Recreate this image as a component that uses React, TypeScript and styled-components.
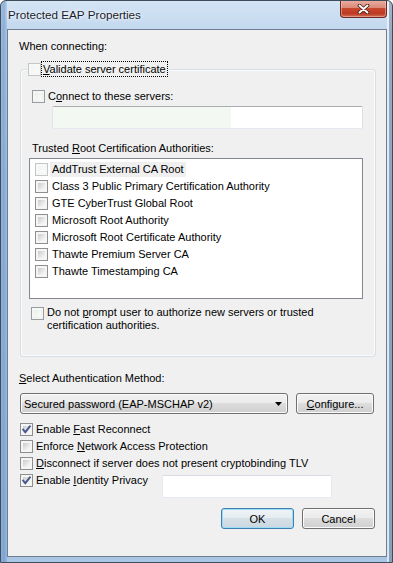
import React from 'react';
import styled, { createGlobalStyle } from 'styled-components';

const GlobalStyle = createGlobalStyle`
  html, body { margin: 0; padding: 0; background: #ffffff; }
  body { font-family: "Liberation Sans", Arial, sans-serif; font-size: 11px; color: #000; }
  * { box-sizing: border-box; }
  u { text-decoration: underline; text-underline-offset: 1px; }
`;

const Window = styled.div`
  width: 393px;
  height: 563px;
  display: flex;
  flex-direction: column;
  border: 1px solid #3e4c5c;
  border-radius: 6px 6px 0 0;
  padding: 0 5px 5px 6px;
  overflow: hidden;
  background:
    linear-gradient(to right, transparent 0, transparent calc(100% - 5px), rgba(255,255,255,0.55) calc(100% - 5px), rgba(255,255,255,0.55) calc(100% - 3px), rgba(70,90,110,0.35) calc(100% - 3px), rgba(70,90,110,0.35) 100%),
    linear-gradient(to right, rgba(80,130,190,0.35) 0, rgba(80,130,190,0.5) 3px, rgba(80,130,190,0.2) 6px, transparent 6px),
    linear-gradient(to bottom, #d4e4f5 0, #c3d8ee 28px, #b4cde8 200px, #a9c6e4 100%);
`;

const TitleBar = styled.div`
  height: 28px;
  flex: none;
  display: flex;
  align-items: flex-start;
  justify-content: space-between;
`;

const Title = styled.div`
  padding: 7px 0 0 1px;
  font-size: 11.7px;
  line-height: 14px;
  color: #18202b;
  text-shadow: 0 0 5px rgba(255, 255, 255, 0.95), 0 0 2px rgba(255, 255, 255, 0.9);
`;

const CloseButton = styled.div`
  width: 47px;
  height: 18px;
  margin-top: -1px;
  display: flex;
  align-items: center;
  justify-content: center;
  border: 1px solid #6b2a20;
  border-top: none;
  border-radius: 0 0 4px 4px;
  background: linear-gradient(to bottom, #eab1a4 0%, #dc8a78 45%, #c7472f 50%, #bd3a23 80%, #d0705a 100%);
  box-shadow: inset 0 0 0 1px rgba(255, 210, 200, 0.45);
`;

const Client = styled.div`
  flex: 1;
  display: flex;
  flex-direction: column;
  border: 1px solid #6e7d8f;
  background: #f0f0f0;
  padding: 10px 10px 0 11px;
`;

const Label = styled.div<{ $mt?: number }>`
  line-height: 13px;
  margin-top: ${p => p.$mt ?? 0}px;
  white-space: nowrap;
`;

const GroupBox = styled.div`
  position: relative;
  margin: 16px 0 0 1px;
  display: flex;
  flex-direction: column;
  border: 1px solid #d5dfe5;
  border-radius: 3px;
  box-shadow: inset 0 0 0 1px #fafbfc;
  padding: 20px 12px 24px 11px;
`;

const Legend = styled.div`
  position: absolute;
  top: -8px;
  left: 6px;
  display: flex;
  align-items: center;
  gap: 1px;
  padding: 0 2px 0 1px;
  background: #f0f0f0;
`;

const FocusText = styled.span`
  line-height: 14px;
  padding: 0 1px;
  outline: 1px dotted #000;
  outline-offset: 0;
  white-space: nowrap;
`;

type Tone = 'normal' | 'pale' | 'faded';

const Box = styled.span<{ $tone: Tone }>`
  position: relative;
  flex: none;
  width: 13px;
  height: 13px;
  border: 1px solid ${p => (p.$tone === 'faded' ? '#c2c6c9' : p.$tone === 'pale' ? '#9a9d9f' : '#8e8f8f')};
  background: ${p => (p.$tone === 'faded' ? '#f7f9f7' : '#f4f4f4')};
  &::after {
    content: '';
    position: absolute;
    inset: 1px;
    background: ${p =>
      p.$tone === 'faded'
        ? 'linear-gradient(135deg, #f1f4f1, #fbfcfb)'
        : p.$tone === 'pale'
        ? 'linear-gradient(135deg, #e9efe8, #fafcfa)'
        : 'linear-gradient(135deg, #c9cbce, #eeeeee 70%, #f8f8f8)'};
    border: 1px solid ${p => (p.$tone === 'normal' ? '#f6f6f6' : 'transparent')};
  }
  svg {
    position: absolute;
    left: 0;
    top: 0;
    z-index: 1;
  }
`;

const Check = ({ tone = 'normal', checked = false }: { tone?: Tone; checked?: boolean }) => (
  <Box $tone={tone}>
    {checked && (
      <svg width="11" height="11" viewBox="0 0 11 11">
        <path d="M2.2 5.6 L4.3 8.2 L8.9 2.3" fill="none" stroke="#46598a" strokeWidth="1.9" strokeLinecap="square" strokeLinejoin="miter" />
      </svg>
    )}
  </Box>
);

const CheckRow = styled.div<{ $ml?: number; $width?: number }>`
  display: flex;
  align-items: center;
  gap: 3px;
  height: ${p => (p.$width ? 17 : 13)}px;
  margin-left: ${p => p.$ml ?? 0}px;
  ${p => (p.$width ? `width: ${p.$width}px; flex: none;` : '')}
  line-height: 13px;
  white-space: nowrap;
`;

const OptionRow = styled.div`
  display: flex;
  align-items: center;
  gap: 3px;
  height: 17px;
  margin-left: 1px;
  line-height: 13px;
  white-space: nowrap;
`;

const TextBox = styled.div<{ $tint?: number }>`
  position: relative;
  height: 23px;
  background: #fff;
  border: 1px solid;
  border-color: #abadb3 #dbdfe6 #e3e9ef #e2e3ea;
  border-radius: 2px;
  &::before {
    content: '';
    position: absolute;
    left: 0;
    top: 0;
    bottom: 0;
    width: ${p => p.$tint ?? 0}px;
    background: #f3f9f2;
  }
`;

const ServerBox = styled(TextBox)`
  margin: 3px 0 0 20px;
`;

const PrivacyBox = styled(TextBox)`
  width: 170px;
  margin-top: 3px;
  border-color: #d6dbe2 #e3e9ef #e3e9ef #e3e9ef;
`;

const ListView = styled.div`
  height: 141px;
  margin: 3px 0 0 -3px;
  display: flex;
  flex-direction: column;
  border: 1px solid #828790;
  background: #fff;
  padding: 2px 0 0 5px;
`;

const ListItem = styled.div`
  display: flex;
  align-items: center;
  gap: 2px;
  height: 17px;
  white-space: nowrap;
`;

const ItemText = styled.span<{ $hot?: boolean }>`
  line-height: 15px;
  padding: 0 2px;
  background: ${p => (p.$hot ? '#efefef' : 'transparent')};
`;

const PromptRow = styled.div`
  display: flex;
  align-items: flex-start;
  gap: 3px;
  margin: 7px 0 0 -1px;
  & > span:first-child { margin-top: 1px; }
`;

const PromptText = styled.div`
  line-height: 13px;
`;

const MethodRow = styled.div`
  display: flex;
  align-items: center;
  gap: 8px;
  margin: 8px 0 0 1px;
`;

const Combo = styled.div`
  width: 268px;
  height: 21px;
  display: flex;
  align-items: center;
  justify-content: space-between;
  padding: 0 5px 0 3px;
  border: 1px solid #707070;
  border-radius: 3px;
  background: linear-gradient(to bottom, #f2f2f2 0%, #ebebeb 50%, #dddddd 50%, #cfcfcf 100%);
  box-shadow: inset 0 0 0 1px #fbfbfb;
  white-space: nowrap;
`;

const Button = styled.div<{ $width: number; $default?: boolean }>`
  width: ${p => p.$width}px;
  height: 21px;
  flex: none;
  display: flex;
  align-items: center;
  justify-content: center;
  border: 1px solid ${p => (p.$default ? '#3c7fb1' : '#707070')};
  border-radius: 3px;
  background: ${p =>
    p.$default
      ? 'linear-gradient(to bottom, #eef3f6 0%, #e5ecf1 50%, #d6e0e7 50%, #cbd7df 100%)'
      : 'linear-gradient(to bottom, #f2f2f2 0%, #ebebeb 50%, #dddddd 50%, #cfcfcf 100%)'};
  box-shadow: inset 0 0 0 1px ${p => (p.$default ? '#9fdcf7' : '#fbfbfb')};
  white-space: nowrap;
`;

const OptionsList = styled.div`
  display: flex;
  flex-direction: column;
  margin-top: 7px;
`;

const IdentityRow = styled.div`
  display: flex;
  align-items: flex-start;
  margin-left: 1px;
`;

const ButtonRow = styled.div`
  display: flex;
  justify-content: flex-end;
  gap: 8px;
  margin: 10px 1px 0 0;
`;

const certs = [
  'AddTrust External CA Root',
  'Class 3 Public Primary Certification Authority',
  'GTE CyberTrust Global Root',
  'Microsoft Root Authority',
  'Microsoft Root Certificate Authority',
  'Thawte Premium Server CA',
  'Thawte Timestamping CA',
];

export default function App() {
  return (
    <>
      <GlobalStyle />
      <Window>
        <TitleBar>
          <Title>Protected EAP Properties</Title>
          <CloseButton>
            <svg width="13" height="10" viewBox="0 0 13 10">
              <path d="M2.5 1.5 L10.5 8.5 M10.5 1.5 L2.5 8.5" stroke="#3d1812" strokeWidth="3.6" strokeLinecap="round" />
              <path d="M2.5 1.5 L10.5 8.5 M10.5 1.5 L2.5 8.5" stroke="#ffffff" strokeWidth="2" strokeLinecap="round" />
            </svg>
          </CloseButton>
        </TitleBar>
        <Client>
          <Label>When connecting:</Label>
          <GroupBox>
            <Legend>
              <Check tone="faded" />
              <FocusText>
                <u>V</u>alidate server certificate
              </FocusText>
            </Legend>
            <CheckRow>
              <Check tone="pale" />
              <span>
                C<u>o</u>nnect to these servers:
              </span>
            </CheckRow>
            <ServerBox $tint={178} />
            <Label $mt={13}>
              Trusted <u>R</u>oot Certification Authorities:
            </Label>
            <ListView>
              {certs.map((c, i) => (
                <ListItem key={c}>
                  <Check tone={i === 0 ? 'faded' : 'normal'} />
                  <ItemText $hot={i === 0}>{c}</ItemText>
                </ListItem>
              ))}
            </ListView>
            <PromptRow>
              <Check tone="pale" />
              <PromptText>
                Do not <u>p</u>rompt user to authorize new servers or trusted
                <br />
                certification authorities.
              </PromptText>
            </PromptRow>
          </GroupBox>
          <Label $mt={15}>
            <u>S</u>elect Authentication Method:
          </Label>
          <MethodRow>
            <Combo>
              <span>Secured password (EAP-MSCHAP v2)</span>
              <svg width="7" height="4" viewBox="0 0 7 4">
                <path d="M0 0 H7 L3.5 4 Z" fill="#000" />
              </svg>
            </Combo>
            <Button $width={78}>
              <span>
                <u>C</u>onfigure...
              </span>
            </Button>
          </MethodRow>
          <OptionsList>
            <OptionRow>
              <Check checked />
              <span>
                Enable <u>F</u>ast Reconnect
              </span>
            </OptionRow>
            <OptionRow>
              <Check />
              <span>
                Enforce <u>N</u>etwork Access Protection
              </span>
            </OptionRow>
            <OptionRow>
              <Check />
              <span>
                <u>D</u>isconnect if server does not present cryptobinding TLV
              </span>
            </OptionRow>
            <IdentityRow>
              <CheckRow $width={142}>
                <Check checked />
                <span>
                  Enable <u>I</u>dentity Privacy
                </span>
              </CheckRow>
              <PrivacyBox />
            </IdentityRow>
          </OptionsList>
          <ButtonRow>
            <Button $width={73} $default>
              OK
            </Button>
            <Button $width={73}>Cancel</Button>
          </ButtonRow>
        </Client>
      </Window>
    </>
  );
}
